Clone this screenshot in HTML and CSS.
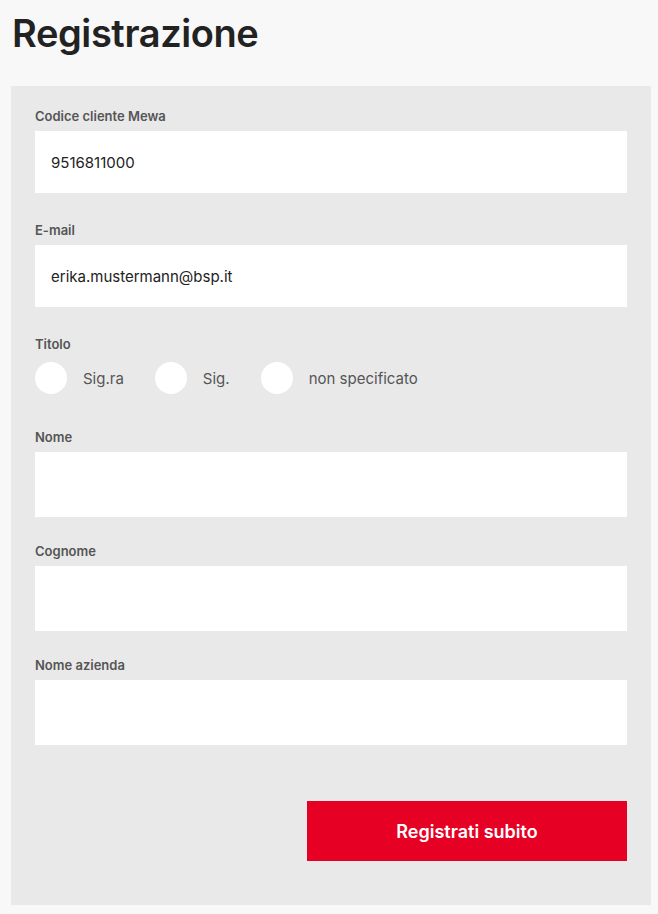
FILE: index.html
```html
<!DOCTYPE html>
<html lang="it">
<head>
<meta charset="utf-8">
<title>Registrazione</title>
<link rel="stylesheet" href="styles.css">
</head>
<body>
<h1 class="title">Registrazione</h1>
<form class="panel">
  <div class="field">
    <label class="label">Codice cliente Mewa</label>
    <div class="input">9516811000</div>
  </div>
  <div class="field">
    <label class="label">E-mail</label>
    <div class="input">erika.mustermann@bsp.it</div>
  </div>
  <div class="field field-radio">
    <label class="label">Titolo</label>
    <div class="radios">
      <span class="radio"><span class="dot"></span>Sig.ra</span>
      <span class="radio"><span class="dot"></span>Sig.</span>
      <span class="radio"><span class="dot"></span>non specificato</span>
    </div>
  </div>
  <div class="field">
    <label class="label">Nome</label>
    <div class="input tall"></div>
  </div>
  <div class="field">
    <label class="label">Cognome</label>
    <div class="input tall"></div>
  </div>
  <div class="field last">
    <label class="label">Nome azienda</label>
    <div class="input tall"></div>
  </div>
  <div class="actions">
    <button type="button" class="btn">Registrati subito</button>
  </div>
</form>
</body>
</html>
```
FILE: styles.css
```css
* { box-sizing: border-box; }
html, body { margin: 0; padding: 0; }
body {
  background: #f8f8f8;
  font-family: Inter, "Liberation Sans", sans-serif;
  color: #222;
  width: 658px;
}
.title {
  margin: 0;
  padding: 11px 0 0 12px;
  height: 86px;
  font-size: 38px;
  line-height: 44px;
  font-weight: 600;
  letter-spacing: -0.4px;
  color: #222;
}
.panel {
  display: flex;
  flex-direction: column;
  margin: 0 7px 0 11px;
  background: #e9e9e9;
  padding: 22px 24px 44px 24px;
}
.field { margin-bottom: 29px; display: flex; flex-direction: column; }
.field.field-radio { margin-bottom: 35px; }
.label {
  font-size: 13px;
  line-height: 16px;
  font-weight: 600;
  color: #555;
  margin-bottom: 7px;
}
.input {
  background: #fff;
  height: 62px;
  padding: 0 16px;
  display: flex;
  align-items: center;
  font-size: 15px;
  color: #222;
}
.input.tall { height: 65px; }
.field:has(.tall) { margin-bottom: 26px; }
.field.last { margin-bottom: 56px; }
.field-radio .label { margin-bottom: 10px; }
.radios { display: flex; gap: 31px; }
.radio {
  display: flex;
  align-items: center;
  gap: 16px;
  font-size: 15px;
  color: #555;
  height: 32px;
}
.dot {
  width: 32px;
  height: 32px;
  border-radius: 50%;
  background: #fff;
  flex: none;
}
.actions { display: flex; justify-content: flex-end; }
.btn {
  width: 320px;
  height: 60px;
  border: 0;
  background: #e60023;
  color: #fff;
  font-family: Inter, "Liberation Sans", sans-serif;
  font-size: 18px;
  font-weight: 600;
}
```
